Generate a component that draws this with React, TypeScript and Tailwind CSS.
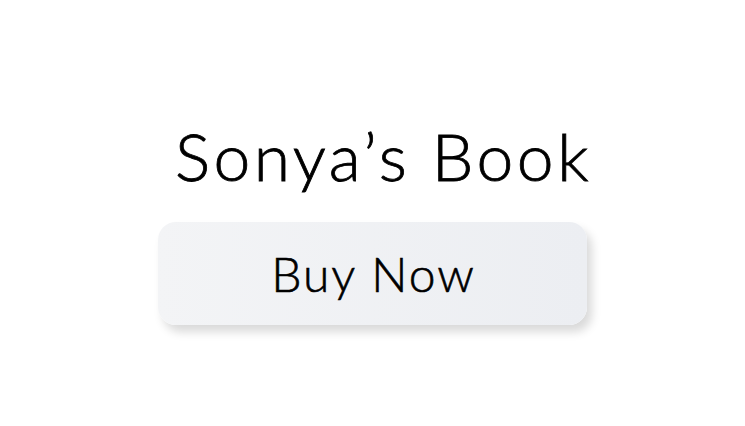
export default function App() {
  return (
    <div className="flex h-[426px] w-[745px] flex-col items-center bg-white pt-[123px] font-['Lato','Noto_Sans',sans-serif] text-black">
      <h1 className="pl-[22px] text-[66px] leading-none font-light tracking-[3.5px] [-webkit-text-stroke:0.8px_black]">Sonya’s Book</h1>
      <button className="mt-[33px] flex h-[103px] w-[429px] items-center justify-center rounded-[18px] bg-gradient-to-r from-[#f3f4f6] to-[#eceef2] shadow-[5px_7px_10px_rgba(0,0,0,0.15)]">
        <span className="pl-[2px] text-[48px] leading-none font-light tracking-[2px] [-webkit-text-stroke:0.6px_black]">Buy Now</span>
      </button>
    </div>
  );
}
